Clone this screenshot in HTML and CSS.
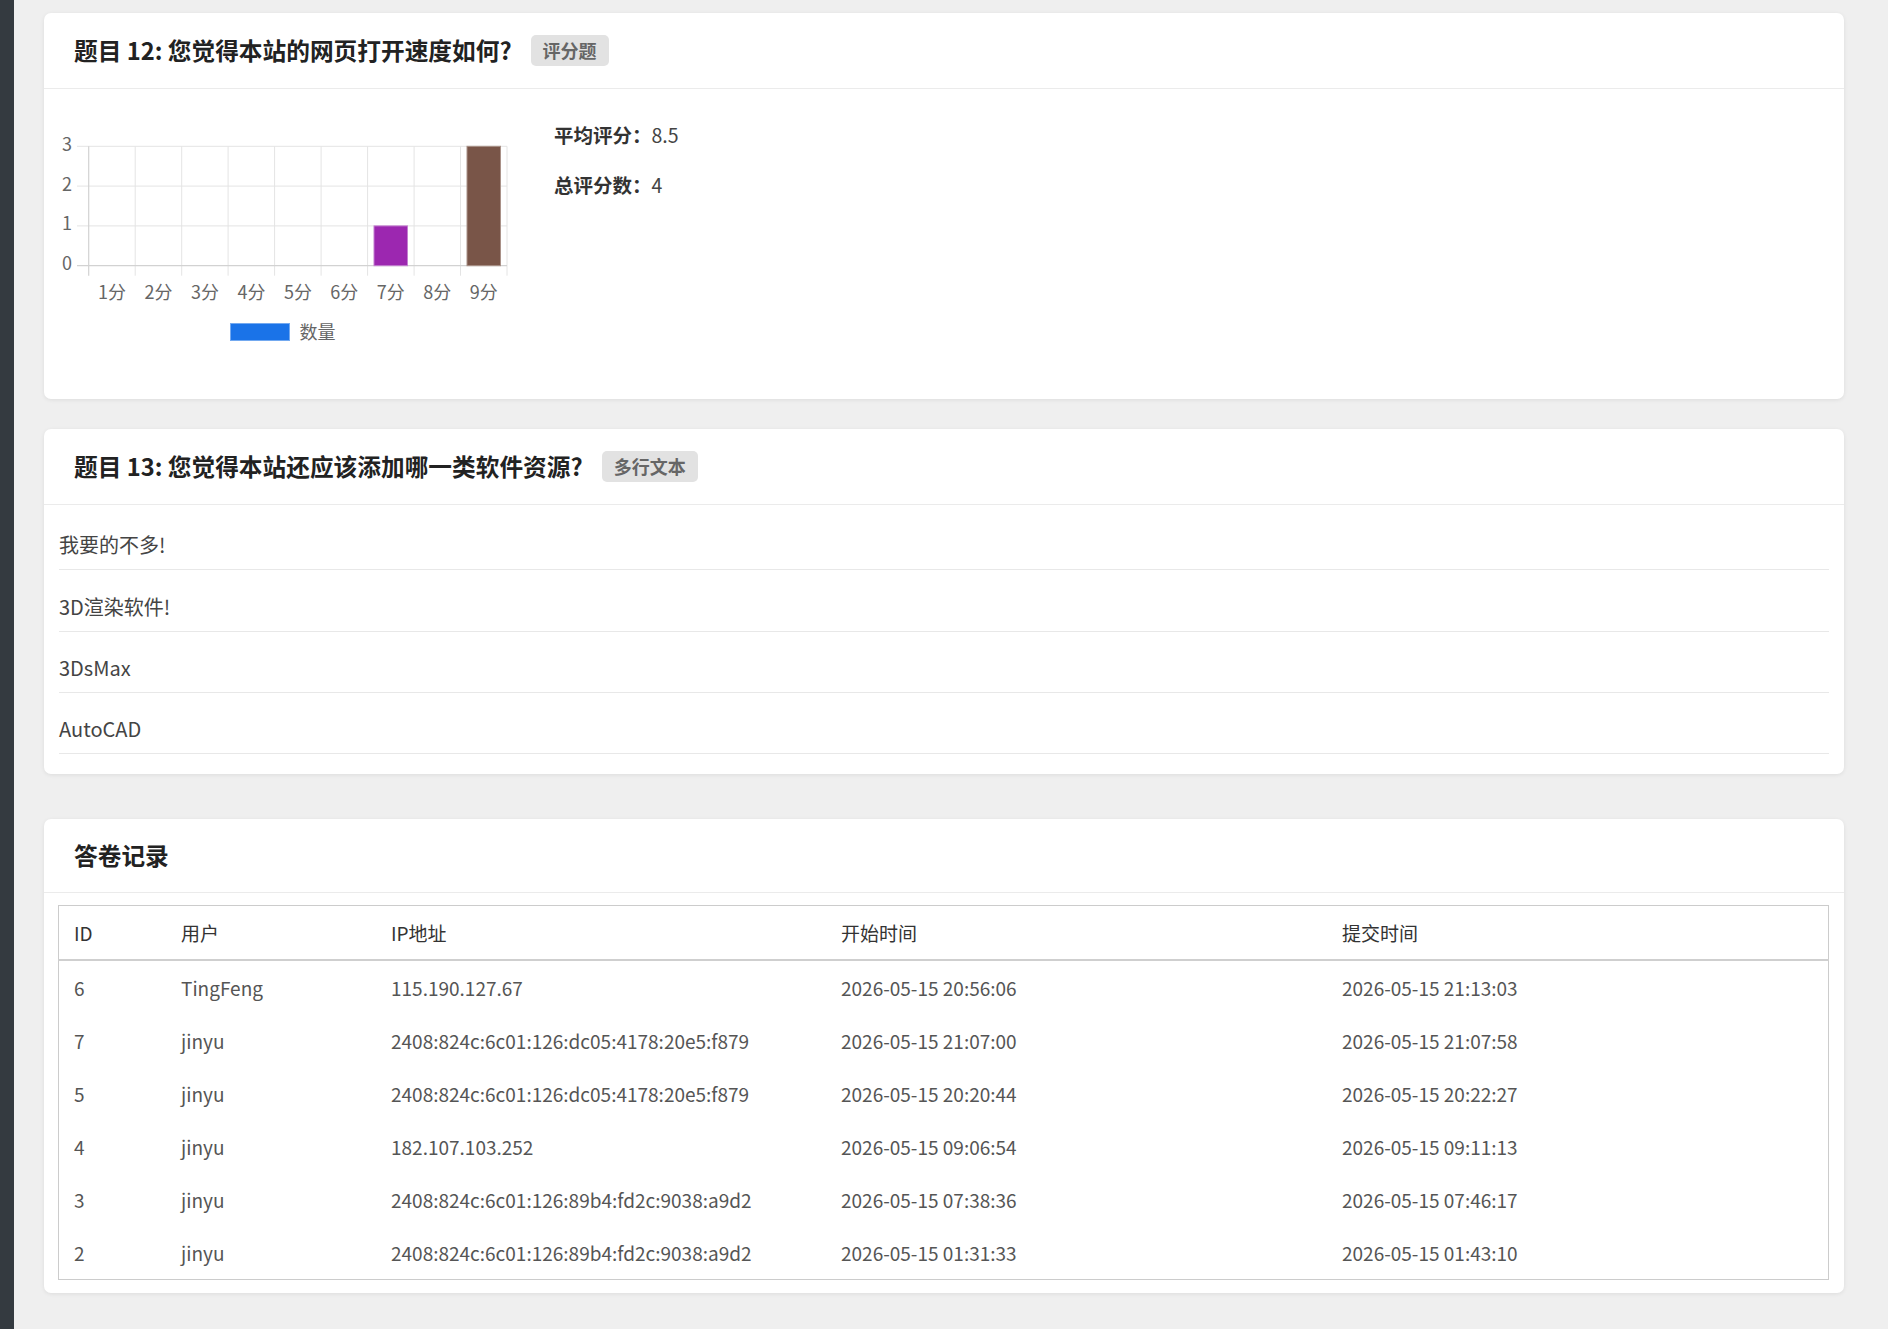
FILE: index.html
```html
<!DOCTYPE html>
<html lang="zh-CN">
<head>
<meta charset="UTF-8">
<meta name="viewport" content="width=device-width, initial-scale=1.0">
<title>问卷统计</title>
<link rel="stylesheet" href="styles.css">
</head>
<body>

<div class="page">
    <aside class="side"></aside>

    <main class="main">
        <section class="card">
            <div class="card-head">
                <h5 class="card-title">题目 12: 您觉得本站的网页打开速度如何?</h5>
                <span class="badge">评分题</span>
            </div>
            <div class="card-body chart-row">
                <svg class="chart" width="455" height="280" viewBox="0 0 455 280">
                    <g class="grid">
                        <line x1="77.2" y1="43.3" x2="77.2" y2="172.7"/>
                        <line x1="123.7" y1="43.3" x2="123.7" y2="172.7"/>
                        <line x1="170.1" y1="43.3" x2="170.1" y2="172.7"/>
                        <line x1="216.6" y1="43.3" x2="216.6" y2="172.7"/>
                        <line x1="263.1" y1="43.3" x2="263.1" y2="172.7"/>
                        <line x1="309.6" y1="43.3" x2="309.6" y2="172.7"/>
                        <line x1="356.1" y1="43.3" x2="356.1" y2="172.7"/>
                        <line x1="402.5" y1="43.3" x2="402.5" y2="172.7"/>
                        <line x1="449" y1="43.3" x2="449" y2="172.7"/>
                        <line x1="19" y1="43.3" x2="449" y2="43.3"/>
                        <line x1="19" y1="83.1" x2="449" y2="83.1"/>
                        <line x1="19" y1="122.9" x2="449" y2="122.9"/>
                    </g>
                    <g class="axis">
                        <line x1="30.7" y1="43.3" x2="30.7" y2="172.7"/>
                        <line x1="19" y1="162.7" x2="449" y2="162.7"/>
                    </g>
                    <rect class="bar-7" x="316" y="122.9" width="33.5" height="39.8"/>
                    <rect class="bar-9" x="409" y="43.3" width="33.5" height="119.4"/>
                    <g class="tick-y">
                        <text x="14" y="47.7">3</text>
                        <text x="14" y="87.5">2</text>
                        <text x="14" y="127.3">1</text>
                        <text x="14" y="167.1">0</text>
                    </g>
                    <g class="tick-x">
                        <text x="54" y="196">1分</text>
                        <text x="100.4" y="196">2分</text>
                        <text x="146.9" y="196">3分</text>
                        <text x="193.4" y="196">4分</text>
                        <text x="239.9" y="196">5分</text>
                        <text x="286.3" y="196">6分</text>
                        <text x="332.8" y="196">7分</text>
                        <text x="379.3" y="196">8分</text>
                        <text x="425.8" y="196">9分</text>
                    </g>
                    <rect class="legend-box" x="172.5" y="220.5" width="59" height="17"/>
                    <text class="legend-text" x="241.5" y="235.5">数量</text>
                </svg>
                <div class="stats">
                    <p><b>平均评分：</b>8.5</p>
                    <p><b>总评分数：</b>4</p>
                </div>
            </div>
        </section>

        <section class="card">
            <div class="card-head">
                <h5 class="card-title">题目 13: 您觉得本站还应该添加哪一类软件资源?</h5>
                <span class="badge">多行文本</span>
            </div>
            <div class="card-body answers">
                <div class="answer">我要的不多!</div>
                <div class="answer">3D渲染软件!</div>
                <div class="answer">3DsMax</div>
                <div class="answer">AutoCAD</div>
            </div>
        </section>

        <section class="card card-records">
            <div class="card-head">
                <h5 class="card-title">答卷记录</h5>
            </div>
            <div class="card-body records">
                <table class="record-table">
                    <thead>
                        <tr>
                            <th class="col-id">ID</th>
                            <th class="col-user">用户</th>
                            <th class="col-ip">IP地址</th>
                            <th class="col-start">开始时间</th>
                            <th>提交时间</th>
                        </tr>
                    </thead>
                    <tbody>
                        <tr><td>6</td><td>TingFeng</td><td>115.190.127.67</td><td>2026-05-15 20:56:06</td><td>2026-05-15 21:13:03</td></tr>
                        <tr><td>7</td><td>jinyu</td><td>2408:824c:6c01:126:dc05:4178:20e5:f879</td><td>2026-05-15 21:07:00</td><td>2026-05-15 21:07:58</td></tr>
                        <tr><td>5</td><td>jinyu</td><td>2408:824c:6c01:126:dc05:4178:20e5:f879</td><td>2026-05-15 20:20:44</td><td>2026-05-15 20:22:27</td></tr>
                        <tr><td>4</td><td>jinyu</td><td>182.107.103.252</td><td>2026-05-15 09:06:54</td><td>2026-05-15 09:11:13</td></tr>
                        <tr><td>3</td><td>jinyu</td><td>2408:824c:6c01:126:89b4:fd2c:9038:a9d2</td><td>2026-05-15 07:38:36</td><td>2026-05-15 07:46:17</td></tr>
                        <tr><td>2</td><td>jinyu</td><td>2408:824c:6c01:126:89b4:fd2c:9038:a9d2</td><td>2026-05-15 01:31:33</td><td>2026-05-15 01:43:10</td></tr>
                    </tbody>
                </table>
            </div>
        </section>
    </main>
</div>

</body>
</html>
```

FILE: styles.css
```css
body {
    margin: 0;
    padding: 0;
    background: #efefef;
    font-family: "Noto Sans CJK SC", "Noto Sans", sans-serif;
    color: #333;
}

.page {
    display: flex;
    min-height: 100vh;
}

.side {
    width: 14px;
    flex-shrink: 0;
    background: #343a40;
}

.main {
    flex: 1;
    padding: 13px 44px 38px 30px;
}

.card {
    background: #fff;
    border-radius: 7px;
    box-shadow: 0 1px 4px rgba(0, 0, 0, 0.08);
}

.card + .card {
    margin-top: 30px;
}

.card.card-records {
    margin-top: 45px;
}

.card-head {
    display: flex;
    align-items: center;
    padding: 22px 30px;
    border-bottom: 1px solid #ebebeb;
}

.card-title {
    margin: 0;
    font-size: 23.7px;
    line-height: 29px;
    font-weight: 700;
    color: #222;
}

.badge {
    margin-left: 19px;
    padding: 6px 12px;
    font-size: 18px;
    line-height: 19px;
    font-weight: 700;
    color: #666;
    background: #e2e2e2;
    border-radius: 5px;
}

/* rating chart */
.chart-row {
    display: flex;
    padding: 14px 15px 16px 14px;
}

.chart {
    display: block;
    flex-shrink: 0;
    font-family: "Noto Sans CJK SC", "Noto Sans", sans-serif;
    font-size: 18px;
}

.chart .grid line {
    stroke: #e4e4e4;
    stroke-width: 1;
}

.chart .axis line {
    stroke: #d2d2d2;
    stroke-width: 1.2;
}

.chart .bar-7 {
    fill: #9c27b0;
    stroke: #c37fd0;
    stroke-width: 1;
}

.chart .bar-9 {
    fill: #795548;
    stroke: #a99188;
    stroke-width: 1;
}

.chart .tick-y text {
    fill: #666;
    text-anchor: end;
}

.chart .tick-x text {
    fill: #666;
    text-anchor: middle;
}

.chart .legend-box {
    fill: #1a73e8;
    stroke: #73a9f0;
    stroke-width: 1;
}

.chart .legend-text {
    fill: #666;
}

.stats {
    margin-left: 41px;
    padding-top: 17px;
    font-size: 19.5px;
    line-height: 29px;
    color: #444;
}

.stats p {
    margin: 0 0 21px;
}

.stats b {
    color: #333;
}

/* text answers */
.answers {
    padding: 4px 15px 20px;
}

.answer {
    padding: 21.3px 0 10px;
    font-size: 20px;
    line-height: 29px;
    color: #444;
    border-bottom: 1px solid #e8e8e8;
}

/* records table */
.records {
    padding: 12px 15px 13px 14px;
}

.record-table {
    width: 100%;
    border-collapse: collapse;
    table-layout: fixed;
    border: 1px solid #cccccc;
    font-size: 19px;
}

.record-table th,
.record-table td {
    padding: 12px 15px;
    line-height: 29px;
    text-align: left;
    font-weight: 400;
    white-space: nowrap;
}

.record-table thead th {
    color: #333;
    border-bottom: 2px solid #cfcfcf;
}

.record-table td {
    color: #555;
}

.col-id {
    width: 77px;
}

.col-user {
    width: 180px;
}

.col-ip {
    width: 420px;
}

.col-start {
    width: 471px;
}
```
